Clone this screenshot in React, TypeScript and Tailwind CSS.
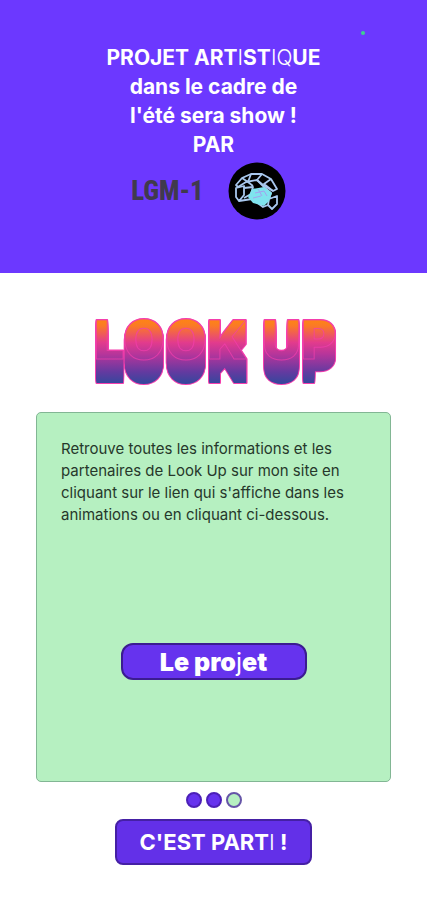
const extrusion = Array.from({ length: 25 }, (_, i) => i);

function LookUpLogo() {
  return (
    <svg viewBox="0 0 244 70" className="h-[70px] w-[244px] overflow-visible" role="img" aria-label="LOOK UP">
      <defs>
        <linearGradient id="sunset" x1="0" y1="0" x2="0" y2="1">
          <stop offset="0" stopColor="#ff8a0c" />
          <stop offset="0.14" stopColor="#fb7a25" />
          <stop offset="0.38" stopColor="#e23b8d" />
          <stop offset="0.55" stopColor="#b5359b" />
          <stop offset="0.8" stopColor="#633aa0" />
          <stop offset="1" stopColor="#2b4a9c" />
        </linearGradient>
        <mask id="letters" maskUnits="userSpaceOnUse" x="0" y="0" width="244" height="70">
          {extrusion.map((d) => (
            <use key={d} href="#word" y={d} fill="#fff" stroke="none" />
          ))}
        </mask>
      </defs>
      {extrusion.map((d) => (
        <use key={d} href="#word" y={d} fill="#f43fae" stroke="#f43fae" strokeWidth="2" />
      ))}
      <rect width="244" height="70" fill="url(#sunset)" mask="url(#letters)" />
      <g fill="none" stroke="#f43fae" strokeOpacity="0.7" strokeWidth="1">
        <text
          id="word"
          x="2"
          y="43"
          strokeLinejoin="round"
          className="font-['Inter',sans-serif] text-[54px] font-black"
        >
          LOOK
          <tspan x="170">UP</tspan>
        </text>
      </g>
    </svg>
  );
}

function Helmet() {
  return (
    <svg viewBox="0 0 58 58" className="size-[58px]" aria-hidden="true">
      <circle cx="29" cy="29" r="28.5" fill="#000" />
      <g fill="none" stroke="#a9c8ee" strokeWidth="1.8" strokeLinejoin="round">
        <path d="M8 23 L14 16 L23 12 L34 12 L43 17 L49 27 L45 29 L35 23 L29 18 L18 20 L10 25 Z" />
        <path d="M14 16 L20 20 M23 12 L20 20 L25 24 M34 12 L29 18 L36 25 M43 17 L36 22 L45 29" />
        <path d="M8 26 L16 24 L16 33 L11 39 L8 35 Z M16 26 L25 25 L23 32 L16 36 M11 39 L24 37" />
        <path d="M41 37 L49 34 L49 42 L44 47 L40 43 Z M36 25 L43 31 L41 37 M24 37 L35 45 L40 43" />
      </g>
      <path d="M24 27 L36 25 L44 31 L41 39 L36 44 L25 41 L20 35 Z" fill="#7fe3ee" />
      <path d="M27 31 L36 29 L39 34 M25 36 L33 34 M30 27 L34 34" fill="none" stroke="#a5a0ee" />
    </svg>
  );
}

export default function App() {
  return (
    <div className="min-h-screen bg-white font-['Inter',sans-serif]">
      <header className="relative flex h-[273px] flex-col items-center bg-[#6c38ff] pt-[43px]">
        <span className="absolute top-[31px] right-[62px] size-1 rounded-full bg-[#3fd08f]" />
        <p className="text-center text-[21px] leading-[29px] font-bold text-white">
          PROJET ART<span className="font-light">I</span>ST<span className="font-light">IQ</span>UE
          <br />
          dans le cadre de
          <br />
          l'été sera show !
          <br />
          PAR
        </p>
        <div className="mt-[3px] flex items-center gap-6 pr-2.5">
          <span className="font-['Roboto_Condensed','Liberation_Sans',sans-serif] text-[27px] leading-[40px] font-extrabold whitespace-nowrap text-[#403a4c]">
            LGM-1
          </span>
          <Helmet />
        </div>
      </header>
      <main className="flex flex-col items-center px-9 pt-[43px] pb-9">
        <h1>
          <LookUpLogo />
        </h1>
        <section className="mt-[26px] flex h-[370px] w-full flex-col items-center rounded-[5px] border border-[#82b694] bg-[#b6f0c1] px-6 pt-[25px]">
          <p className="w-full text-[15px] leading-[22px] text-[#26382b]">
            Retrouve toutes les informations et les
            <br />
            partenaires de Look Up sur mon site en
            <br />
            cliquant sur le lien qui s'affiche dans les
            <br />
            animations ou en cliquant ci-dessous.
          </p>
          <button className="mt-[117px] h-[37px] w-[186px] rounded-xl border-2 border-[#3b1c91] bg-[#6633ee] text-[25px] leading-[32px] font-black text-white">
            Le pro<span className="font-normal">j</span>et
          </button>
        </section>
        <nav className="mt-[10px] flex gap-1" aria-label="Pages">
          <button aria-label="Page 1" className="size-4 rounded-full border-2 border-[#4c20b8] bg-[#6633ee]" />
          <button aria-label="Page 2" className="size-4 rounded-full border-2 border-[#4c20b8] bg-[#6633ee]" />
          <button aria-label="Page 3" className="size-4 rounded-full border-2 border-[#6655a8] bg-[#b6f0c1]" />
        </nav>
        <button className="mt-[11px] h-[46px] w-[197px] rounded-lg border-2 border-[#4520a5] bg-[#6330e8] text-[22px] leading-[32px] font-bold text-white">
          C'EST PART<span className="font-light">I</span> !
        </button>
      </main>
    </div>
  );
}
